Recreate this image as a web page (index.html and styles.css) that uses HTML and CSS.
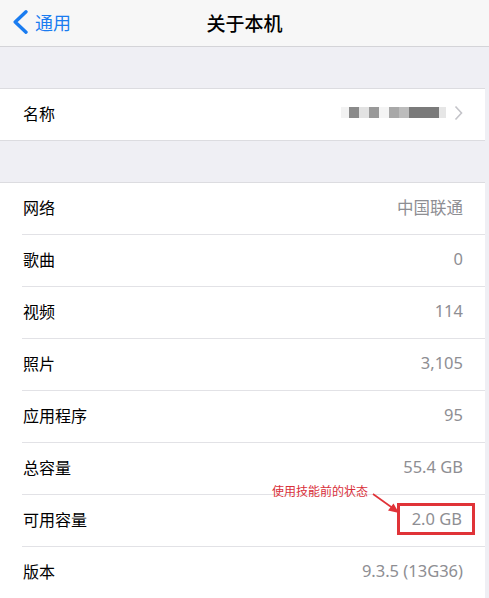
FILE: index.html
```html
<!DOCTYPE html>
<html lang="zh-CN">
<head>
  <meta charset="UTF-8">
  <meta name="viewport" content="width=device-width, initial-scale=1.0">
  <link rel="stylesheet" href="styles.css">
  <title>关于本机</title>
</head>
<body>
  <div class="navbar">
    <div class="back">
      <svg class="back-icon" width="17" height="24" viewBox="0 0 17 24">
        <path d="M14 1.8 L3.2 12 L14 22.2" fill="none" stroke="#1a7cf0" stroke-width="3.4" stroke-linecap="round" stroke-linejoin="round"/>
      </svg>
      <span>通用</span>
    </div>
    <div class="title">关于本机</div>
  </div>

  <div class="spacer"></div>

  <div class="group">
    <div class="row">
      <span class="label">名称</span>
      <span class="value name-value">
        <span class="blur">
          <i class="px p0"></i><i class="px p1"></i><i class="px p2"></i><i class="px p3"></i><i class="px p4"></i><i class="px p5"></i><i class="px p6"></i><i class="px p7"></i><i class="px p8"></i>
        </span>
        <svg class="chevron" width="9" height="16" viewBox="0 0 9 16">
          <path d="M1.5 1.5 L7.5 8 L1.5 14.5" fill="none" stroke="#c4c4c9" stroke-width="1.6"/>
        </svg>
      </span>
    </div>
  </div>

  <div class="spacer"></div>

  <div class="group">
    <div class="row"><span class="label">网络</span><span class="value">中国联通</span></div>
    <div class="row"><span class="label">歌曲</span><span class="value">0</span></div>
    <div class="row"><span class="label">视频</span><span class="value">114</span></div>
    <div class="row"><span class="label">照片</span><span class="value">3,105</span></div>
    <div class="row"><span class="label">应用程序</span><span class="value">95</span></div>
    <div class="row"><span class="label">总容量</span><span class="value">55.4 GB</span></div>
    <div class="row row-marked">
      <span class="label">可用容量</span>
      <span class="value marked">2.0 GB</span>
      <span class="note">使用技能前的状态</span>
      <svg class="arrow" width="30" height="24" viewBox="0 0 30 24">
        <path d="M1 2 L22 17" stroke="#e03338" stroke-width="1.6"/>
        <path d="M27 21 L16 18.5 L21.5 11.5 Z" fill="#e03338"/>
      </svg>
    </div>
    <div class="row"><span class="label">版本</span><span class="value">9.3.5 (13G36)</span></div>
  </div>
</body>
</html>
```

FILE: styles.css
```css
body {
  margin: 0;
  background-color: #efeff4;
  font-family: "Noto Sans", "Noto Sans CJK SC", sans-serif;
  color: #000;
}

.navbar {
  height: 46px;
  background-color: #f7f7f7;
  border-bottom: 1px solid #d4d4d8;
  display: flex;
  align-items: center;
  justify-content: center;
  position: relative;
}

.back {
  position: absolute;
  left: 12px;
  top: 9px;
  display: flex;
  align-items: center;
  gap: 6px;
  color: #1a7cf0;
  font-size: 18px;
}

.title {
  font-size: 19px;
  font-weight: 500;
}

.spacer {
  height: 41px;
}

.group {
  background-color: #fff;
  border-top: 1px solid #dcdce0;
  border-bottom: 1px solid #dcdce0;
  margin-right: 4px;
}

.row {
  height: 51px;
  box-sizing: border-box;
  display: flex;
  align-items: center;
  justify-content: space-between;
  padding: 0 22px 4px 23px;
  position: relative;
}

.group .row + .row {
  margin-top: 1px;
}

.group .row + .row::before {
  content: "";
  position: absolute;
  left: 22px;
  right: 0;
  top: -1px;
  height: 1px;
  background-color: #e2e2e6;
}

.label {
  font-size: 16px;
}

.value {
  font-size: 16.5px;
  color: #8e8e93;
}

.name-value {
  display: flex;
  align-items: center;
}

.blur {
  display: flex;
  align-items: center;
  height: 12px;
  margin-right: 8px;
}

.px {
  display: block;
  width: 10px;
  height: 11px;
}

.p0 { background-color: #f2f2f2; width: 8px; }
.p1 { background-color: #8a8a8a; }
.p2 { background-color: #e2e2e2; }
.p3 { background-color: #999; }
.p4 { background-color: #f4f4f4; }
.p5 { background-color: #a8a8a8; }
.p6 { background-color: #bcbcbc; }
.p7 { background-color: #7a7a7a; width: 30px; }
.p8 { background-color: #e6e6e6; width: 7px; }

.marked {
  border: 3px solid #e03338;
  padding: 1px 10px 2px 12px;
  margin-right: -12px;
  color: #8e8e93;
}

.note {
  position: absolute;
  left: 272px;
  top: -13px;
  font-size: 12px;
  color: #d9303a;
}

.arrow {
  position: absolute;
  left: 372px;
  top: -3px;
}
```
